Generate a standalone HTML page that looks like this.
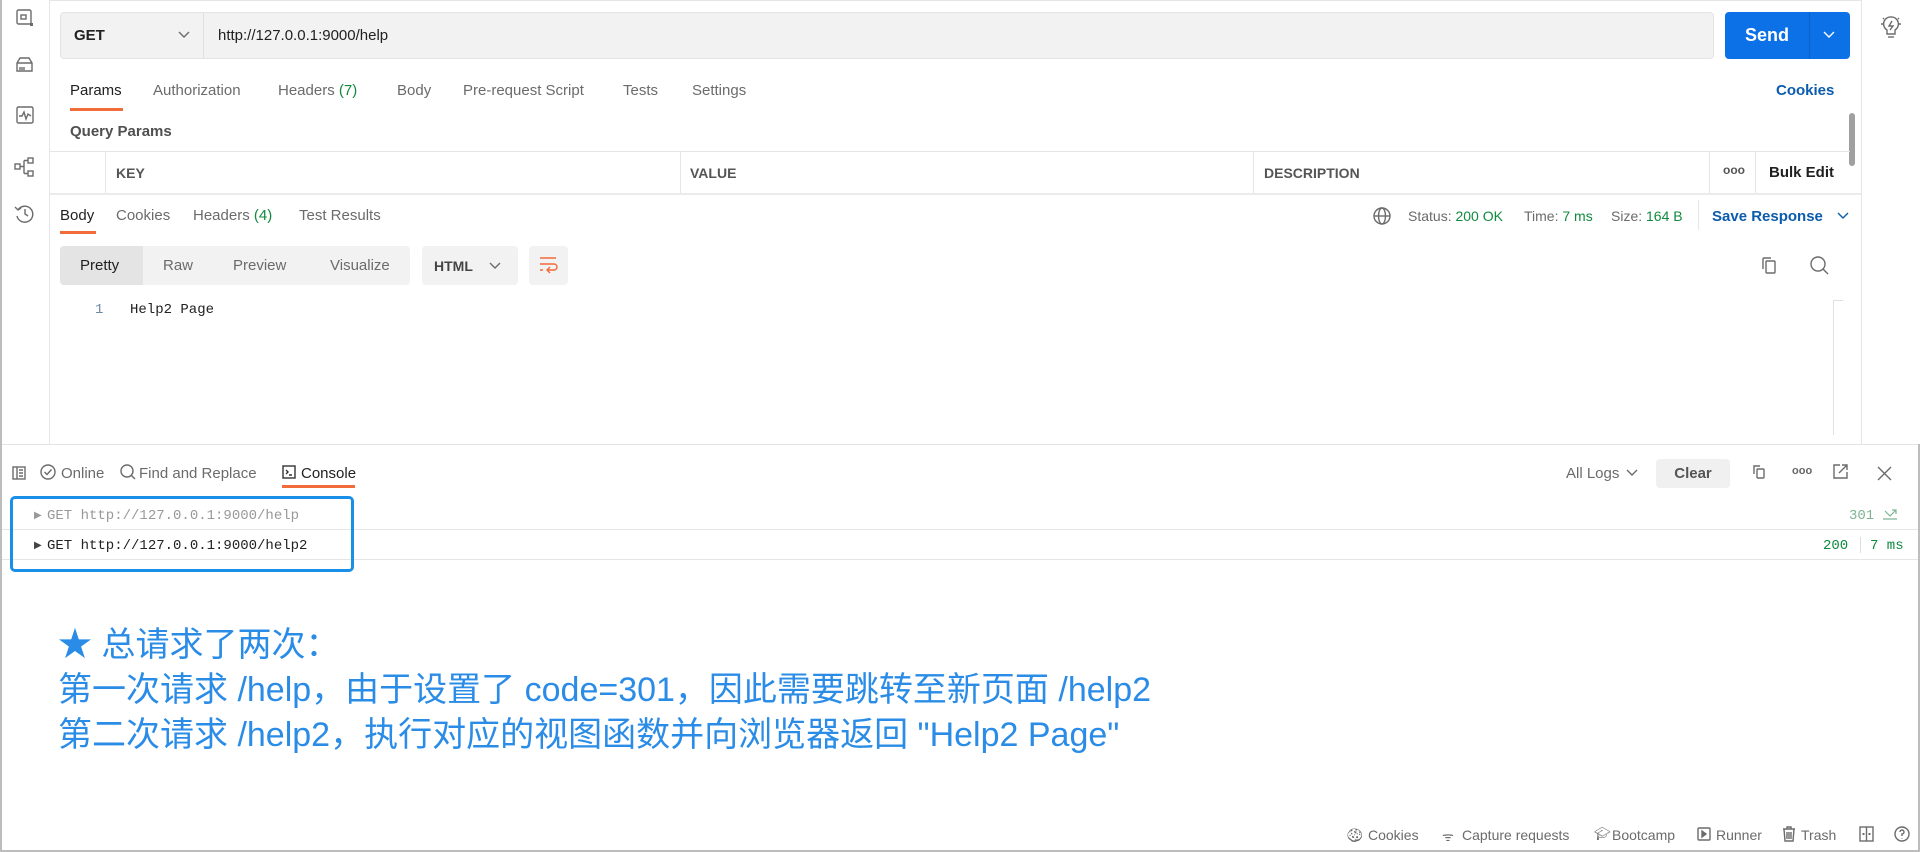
<!DOCTYPE html>
<html><head><meta charset="utf-8">
<style>
*{box-sizing:border-box;margin:0;padding:0}
body{width:1920px;height:852px;overflow:hidden;background:#fff;font-family:"Liberation Sans",Arial,sans-serif;color:#212121;position:relative;font-size:15px}
.a{position:absolute}
.t{color:#6b6b6b}
.mono{font-family:"Liberation Mono",monospace}
svg{position:absolute;fill:none;stroke:#6b6b6b;stroke-width:1.4}
</style></head><body>
<div class="a" style="left:0;top:0;width:2px;height:852px;background:#bdbdbd"></div>
<div class="a" style="left:49px;top:0;width:1px;height:444px;background:#e6e6e6"></div>
<svg style="left:14px;top:8px" width="24" height="20"><rect x="3" y="2" width="14" height="14" rx="1.5"/><rect x="7" y="7" width="5" height="4"/><rect x="16" y="15" width="3" height="3" fill="#6b6b6b" stroke="none"/></svg>
<svg style="left:14px;top:55px" width="24" height="20"><path d="M3 8 L6 3 H15 L18 8 V16 H3 Z M3 8 H18"/><path d="M6 12v3M8 12v3M10 12v3"/></svg>
<svg style="left:14px;top:105px" width="24" height="22"><rect x="3" y="2" width="16" height="16" rx="1.5"/><path d="M5 11 L8 11 L10 7 L12 14 L14 9 L17 11"/></svg>
<svg style="left:12px;top:155px" width="26" height="24"><rect x="3" y="9" width="5" height="5"/><rect x="16" y="3" width="5" height="5"/><rect x="16" y="16" width="5" height="5"/><path d="M8 11.5 H12 M12 5.5 V18.5 M12 5.5 H16 M12 18.5 H16"/></svg>
<svg style="left:12px;top:202px" width="26" height="24"><path d="M6 8 A8 8 0 1 1 5 14"/><path d="M3 5 L6 8 L9 6"/><path d="M13 7 V12 L16 14"/></svg>
<div class="a" style="left:1861px;top:0;width:1px;height:444px;background:#e6e6e6"></div>
<svg style="left:1878px;top:14px" width="26" height="28"><path d="M13 3 A7 7 0 0 1 17 16 V20 H9 V16 A7 7 0 0 1 13 3 Z"/><path d="M10 23 H16"/><path d="M14 7 L11 12 H15 L12 16"/><path d="M3 10H5M21 10H23M5 4L6 5M21 4L20 5"/></svg>
<div class="a" style="left:50px;top:0;width:1811px;height:1px;background:#e6e6e6"></div>
<div class="a" style="left:60px;top:12px;width:1654px;height:47px;background:#f2f2f2;border:1px solid #e4e4e4;border-radius:4px"></div>
<div class="a" style="left:203px;top:13px;width:1px;height:45px;background:#e0e0e0"></div>
<div class="a" style="left:74px;top:27px;font-weight:bold;font-size:15px">GET</div>
<svg style="left:177px;top:29px" width="14" height="12"><path d="M2 3 L7 8 L12 3"/></svg>
<div class="a" style="left:218px;top:27px;font-size:15px">http://127.0.0.1:9000/help</div>
<div class="a" style="left:1725px;top:12px;width:125px;height:47px;background:#0c71e6;border-radius:4px"></div>
<div class="a" style="left:1809px;top:12px;width:1px;height:47px;background:#0a62c9"></div>
<div class="a" style="left:1725px;top:25px;width:84px;text-align:center;color:#fff;font-weight:bold;font-size:18px">Send</div>
<svg style="left:1822px;top:29px;stroke:#fff" width="14" height="12"><path d="M2 3 L7 8 L12 3"/></svg>
<div class="a" style="top:82px;left:70px;font-size:15px">Params</div>
<div class="a" style="left:70px;top:108px;width:53px;height:3px;background:#f26b3a"></div>
<div class="a t" style="top:82px;left:153px">Authorization</div>
<div class="a t" style="top:82px;left:278px">Headers <span style="color:#0f8a3e">(7)</span></div>
<div class="a t" style="top:82px;left:397px">Body</div>
<div class="a t" style="top:82px;left:463px">Pre-request Script</div>
<div class="a t" style="top:82px;left:623px">Tests</div>
<div class="a t" style="top:82px;left:692px">Settings</div>
<div class="a" style="top:82px;left:1776px;color:#0b5cad;font-weight:bold">Cookies</div>
<div class="a" style="top:123px;left:70px;font-weight:bold;color:#505050">Query Params</div>
<div class="a" style="left:1849px;top:113px;width:6px;height:53px;background:#a0a0a0;border-radius:3px"></div>
<div class="a" style="left:50px;top:151px;width:1800px;height:1px;background:#e6e6e6"></div>
<div class="a" style="left:50px;top:193px;width:1811px;height:2px;background:#ebebeb"></div>
<div class="a" style="left:105px;top:151px;width:1px;height:42px;background:#e6e6e6"></div>
<div class="a" style="left:680px;top:151px;width:1px;height:42px;background:#e6e6e6"></div>
<div class="a" style="left:1253px;top:151px;width:1px;height:42px;background:#e6e6e6"></div>
<div class="a" style="left:1709px;top:151px;width:1px;height:42px;background:#e6e6e6"></div>
<div class="a" style="left:1755px;top:151px;width:1px;height:42px;background:#e6e6e6"></div>
<div class="a" style="left:116px;top:165px;font-weight:bold;color:#555;font-size:14px">KEY</div>
<div class="a" style="left:690px;top:165px;font-weight:bold;color:#555;font-size:14px">VALUE</div>
<div class="a" style="left:1264px;top:165px;font-weight:bold;color:#555;font-size:14px">DESCRIPTION</div>
<div class="a" style="left:1723px;top:163px;font-size:12px;font-weight:bold;color:#555">ooo</div>
<div class="a" style="left:1769px;top:164px;font-weight:bold;font-size:15px">Bulk Edit</div>
<div class="a" style="top:207px;left:60px">Body</div>
<div class="a" style="left:60px;top:231px;width:36px;height:3px;background:#f26b3a"></div>
<div class="a t" style="top:207px;left:116px">Cookies</div>
<div class="a t" style="top:207px;left:193px">Headers <span style="color:#0f8a3e">(4)</span></div>
<div class="a t" style="top:207px;left:299px">Test Results</div>
<svg style="left:1372px;top:206px" width="20" height="20"><circle cx="10" cy="10" r="8"/><ellipse cx="10" cy="10" rx="3.5" ry="8"/><path d="M2 10H18"/></svg>
<div class="a t" style="top:208px;left:1408px;font-size:14px">Status: <span style="color:#0f8a3e">200 OK</span></div>
<div class="a t" style="top:208px;left:1524px;font-size:14px">Time: <span style="color:#0f8a3e">7 ms</span></div>
<div class="a t" style="top:208px;left:1611px;font-size:14px">Size: <span style="color:#0f8a3e">164 B</span></div>
<div class="a" style="left:1698px;top:200px;width:1px;height:30px;background:#e6e6e6"></div>
<div class="a" style="top:208px;left:1712px;color:#0b5cad;font-weight:bold;font-size:15px">Save Response</div>
<svg style="left:1836px;top:210px;stroke:#0b5cad" width="14" height="12"><path d="M2 3 L7 8 L12 3"/></svg>
<div class="a" style="left:60px;top:246px;width:350px;height:39px;background:#f2f2f2;border-radius:4px"></div>
<div class="a" style="left:60px;top:246px;width:83px;height:39px;background:#e4e4e4;border-radius:4px 0 0 4px"></div>
<div class="a" style="left:80px;top:257px">Pretty</div>
<div class="a t" style="left:163px;top:257px">Raw</div>
<div class="a t" style="left:233px;top:257px">Preview</div>
<div class="a t" style="left:330px;top:257px">Visualize</div>
<div class="a" style="left:422px;top:246px;width:96px;height:39px;background:#f2f2f2;border-radius:4px"></div>
<div class="a" style="left:434px;top:258px;font-weight:bold;color:#444;font-size:14px">HTML</div>
<svg style="left:488px;top:260px" width="14" height="12"><path d="M2 3 L7 8 L12 3"/></svg>
<div class="a" style="left:529px;top:246px;width:39px;height:39px;background:#f2f2f2;border-radius:4px"></div>
<svg style="left:538px;top:255px;stroke:#f26b3a" width="22" height="22"><path d="M2 3H18M2 9H16A3 3 0 0 1 16 15H10M12 12L9 15L12 18M2 15H5"/></svg>
<svg style="left:1759px;top:255px" width="22" height="22"><rect x="7" y="6" width="9" height="12" rx="1"/><path d="M4 14V4A1 1 0 0 1 5 3H12"/></svg>
<svg style="left:1808px;top:254px" width="22" height="22"><circle cx="10" cy="10" r="7"/><path d="M15 15L20 20"/></svg>
<div class="a mono" style="left:95px;top:302px;color:#6b8aa8;font-size:14px">1</div>
<div class="a mono" style="left:130px;top:302px;font-size:14px">Help2 Page</div>
<div class="a" style="left:1833px;top:300px;width:1px;height:135px;background:#e0e0e0"></div>
<div class="a" style="left:1833px;top:300px;width:10px;height:1px;background:#e0e0e0"></div>
<div class="a" style="left:2px;top:444px;width:1918px;height:1px;background:#e3e3e3"></div>
<svg style="left:10px;top:464px" width="18" height="18"><rect x="3" y="3" width="12" height="12"/><path d="M7 3V15M9 6H13M9 9H13M9 12H13"/></svg>
<svg style="left:38px;top:462px" width="20" height="20"><circle cx="10" cy="10" r="7"/><path d="M6.5 10L9 12.5L13.5 7.5"/></svg>
<div class="a t" style="left:61px;top:465px">Online</div>
<svg style="left:118px;top:462px" width="20" height="20"><circle cx="9" cy="9" r="6"/><path d="M13.5 13.5L17 17"/></svg>
<div class="a t" style="left:139px;top:465px">Find and Replace</div>
<svg style="left:280px;top:463px;stroke:#333" width="18" height="18"><rect x="3" y="3" width="12" height="12"/><path d="M6 7L8 9L6 11M9 12H12"/></svg>
<div class="a" style="left:301px;top:465px">Console</div>
<div class="a" style="left:282px;top:485px;width:73px;height:3px;background:#f26b3a"></div>
<div class="a t" style="left:1566px;top:465px">All Logs</div>
<svg style="left:1625px;top:467px" width="14" height="12"><path d="M2 3 L7 8 L12 3"/></svg>
<div class="a" style="left:1656px;top:459px;width:74px;height:29px;background:#f0f0f0;border-radius:4px"></div>
<div class="a" style="left:1656px;top:465px;width:74px;text-align:center;font-weight:bold;color:#555">Clear</div>
<svg style="left:1750px;top:462px" width="20" height="20"><rect x="7" y="7" width="7" height="9" rx="1"/><path d="M4 12V4H10"/></svg>
<div class="a" style="left:1792px;top:465px;font-size:11px;font-weight:bold;color:#666">ooo</div>
<svg style="left:1829px;top:461px" width="22" height="22"><path d="M11 4H5V17H18V11M13 4H18V9M18 4L10 12"/></svg>
<svg style="left:1874px;top:463px" width="22" height="22"><path d="M4 4L17 17M17 4L4 17"/></svg>
<div class="a" style="left:2px;top:529px;width:1918px;height:1px;background:#e6e6e6"></div>
<div class="a" style="left:2px;top:559px;width:1918px;height:1px;background:#e6e6e6"></div>
<div class="a" style="left:34px;top:510px;font-size:10px;color:#999">▶</div>
<div class="a mono" style="left:47px;top:508px;font-size:14px;color:#999">GET http://127.0.0.1:9000/help</div>
<div class="a" style="left:34px;top:540px;font-size:10px;color:#444">▶</div>
<div class="a mono" style="left:47px;top:538px;font-size:14px;color:#222">GET http://127.0.0.1:9000/help2</div>
<div class="a mono" style="left:1849px;top:508px;font-size:14px;color:#7fb394">301</div>
<svg style="left:1880px;top:505px;stroke:#7fb394;stroke-width:1.2" width="20" height="18"><path d="M3 14H17M5 6L10 11L16 5M12 5H16V9"/></svg>
<div class="a mono" style="left:1823px;top:538px;font-size:14px;color:#0f8a3e">200</div>
<div class="a" style="left:1860px;top:537px;width:1px;height:16px;background:#ddd"></div>
<div class="a mono" style="left:1870px;top:538px;font-size:14px;color:#0f8a3e">7 ms</div>
<div class="a" style="left:10px;top:496px;width:344px;height:76px;border:3px solid #1a8fe8;border-radius:5px"></div>
<div class="a" style="left:58px;top:623px;font-size:34px;line-height:45px;color:#2a8ce6;font-family:'Liberation Sans','Noto Sans CJK SC',sans-serif;white-space:nowrap">★ 总请求了两次：<br>第一次请求 /help，由于设置了 code=301，因此需要跳转至新页面 /help2<br>第二次请求 /help2，执行对应的视图函数并向浏览器返回 "Help2 Page"</div>
<div class="a" style="left:0;top:850px;width:1920px;height:2px;background:#bdbdbd"></div>
<div class="a" style="left:1918px;top:444px;width:2px;height:408px;background:#bdbdbd"></div>
<div class="a t" style="left:1346px;top:827px;font-size:14px">🍪︎</div>
<div class="a t" style="left:1368px;top:827px;font-size:14px">Cookies</div>
<div class="a t" style="left:1442px;top:827px;font-size:13px">ᯤ</div>
<div class="a t" style="left:1462px;top:827px;font-size:14px">Capture requests</div>
<div class="a t" style="left:1594px;top:826px;font-size:13px">🎓︎</div>
<div class="a t" style="left:1612px;top:827px;font-size:14px">Bootcamp</div>
<svg style="left:1696px;top:826px" width="16" height="16"><rect x="2" y="2" width="12" height="12" rx="1"/><path d="M6 5L10 8L6 11Z" fill="#6b6b6b"/></svg>
<div class="a t" style="left:1716px;top:827px;font-size:14px">Runner</div>
<svg style="left:1781px;top:825px" width="16" height="18"><path d="M2 4H14M6 4V2H10V4M3 4L4 16H12L13 4M6 7V14M8 7V14M10 7V14"/></svg>
<div class="a t" style="left:1801px;top:827px;font-size:14px">Trash</div>
<svg style="left:1858px;top:825px" width="18" height="18"><rect x="2" y="2" width="13" height="14"/><path d="M8.5 2V16"/><rect x="4.5" y="8" width="2" height="2" fill="#6b6b6b" stroke="none"/><rect x="10.5" y="8" width="2" height="2" fill="#6b6b6b" stroke="none"/></svg>
<svg style="left:1893px;top:825px" width="18" height="18"><circle cx="9" cy="9" r="7"/><path d="M7 7A2 2 0 1 1 9 9V11M9 13V13.5"/></svg>
</body></html>
